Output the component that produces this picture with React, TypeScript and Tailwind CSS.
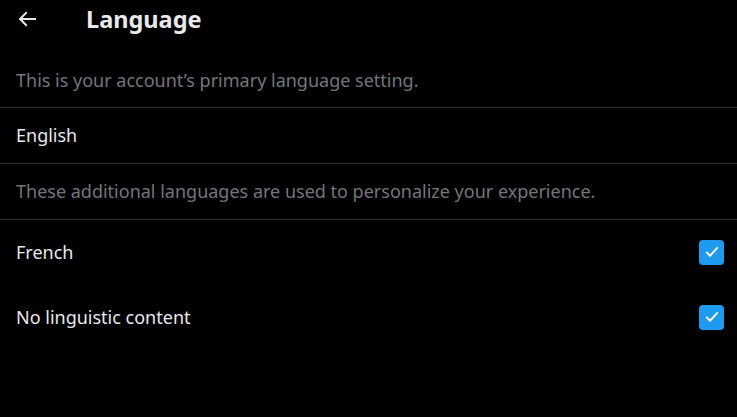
import React from "react";

function Check() {
  return (
    <div className="w-[25px] h-[25px] rounded-[4px] bg-[#1d9bf0] flex items-center justify-center">
      <svg width="18" height="18" viewBox="0 0 24 24" fill="none">
        <path d="M5 12.5l4.5 4.5L19 6.5" stroke="white" strokeWidth="2.5" strokeLinecap="round" strokeLinejoin="round" />
      </svg>
    </div>
  );
}

export default function App() {
  return (
    <div className="w-[737px] h-[417px] bg-black text-[#e7e9ea] overflow-hidden" style={{ fontFamily: '"Noto Sans", sans-serif' }}>
      <div className="h-[38px] flex items-center px-4">
        <svg width="24" height="24" viewBox="0 0 24 24" className="text-[#e7e9ea] -ml-[1px]">
          <path fill="currentColor" d="M7.414 13l5.043 5.04-1.414 1.42L3.586 12l7.457-7.46 1.414 1.42L7.414 11H21v2H7.414z" />
        </svg>
        <h1 className="ml-[47px] text-[23.5px] font-bold leading-7 -mt-[1px]">Language</h1>
      </div>
      <div className="pt-[30px] pb-[15px] px-4 text-[18px] leading-6 text-[#71767b]">
        This is your account’s primary language setting.
      </div>
      <div className="border-t border-[#2f3336] h-[56px] flex items-center px-4 text-[18px]">English</div>
      <div className="border-t border-[#2f3336] h-[56px] flex items-center px-4 text-[18px] text-[#71767b]">
        These additional languages are used to personalize your experience.
      </div>
      <div className="border-t border-[#2f3336]">
        <div className="h-[64px] flex items-center justify-between pl-4 pr-[13px] text-[18px]">
          <span>French</span>
          <Check />
        </div>
        <div className="h-[66px] flex items-center justify-between pl-4 pr-[13px] text-[18px]">
          <span>No linguistic content</span>
          <Check />
        </div>
      </div>
    </div>
  );
}
